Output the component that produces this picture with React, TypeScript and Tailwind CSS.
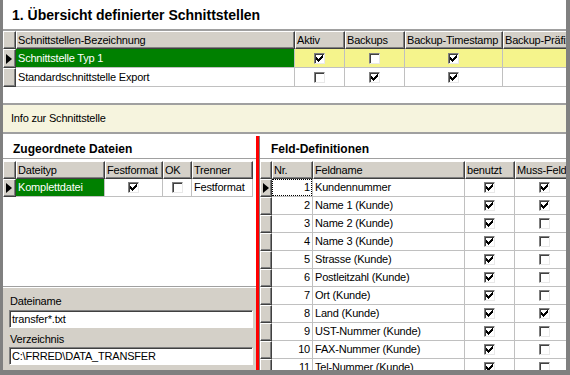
import React from "react";

const CHECK =
  "M6 0h1v1h-1z M5 1h2v1h-2z M0 2h1v1h-1z M4 2h3v1h-3z M0 3h2v1h-2z M3 3h3v1h-3z M0 4h5v1h-5z M1 5h3v1h-3z M2 6h1v1h-1z";

function Check({ on }: { on: boolean }) {
  return (
    <div className="relative w-[11px] h-[11px] bg-white border border-t-[#808080] border-l-[#808080] border-r-[#e8e8e8] border-b-[#e8e8e8] shadow-[inset_1px_1px_0_#404040]">
      {on && (
        <svg
          className="absolute left-[1px] top-[1px]"
          width="7"
          height="7"
          viewBox="0 0 7 7"
          shapeRendering="crispEdges"
        >
          <path d={CHECK} fill="#000" />
        </svg>
      )}
    </div>
  );
}

function Ind({ w, active }: { w: string; active?: boolean }) {
  return (
    <div
      className={`${w} h-full shrink-0 bg-[#d4d0c8] border-t border-l border-t-white border-l-white border-r border-b border-r-[#404040] border-b-[#404040] shadow-[inset_-1px_-1px_0_#808080] flex items-center pl-[2px]`}
    >
      {active && (
        <div className="w-0 h-0 border-y-[5px] border-y-transparent border-l-[6px] border-l-black" />
      )}
    </div>
  );
}

function H({ w, children }: { w: string; children?: React.ReactNode }) {
  return (
    <div
      className={`${w} h-full shrink-0 bg-[#d4d0c8] border-t border-l border-t-white border-l-white border-r border-b border-r-[#404040] border-b-[#404040] shadow-[inset_-1px_-1px_0_#808080] flex items-center pl-[1px] whitespace-nowrap overflow-hidden`}
    >
      {children}
    </div>
  );
}

function D({
  w,
  className = "",
  children,
}: {
  w: string;
  className?: string;
  children?: React.ReactNode;
}) {
  return (
    <div
      className={`${w} h-full shrink-0 border-r border-b border-[#c0c0c0] flex items-center whitespace-nowrap overflow-hidden ${className}`}
    >
      {children}
    </div>
  );
}

const fields: [number, string, boolean, boolean][] = [
  [1, "Kundennummer", true, true],
  [2, "Name 1 (Kunde)", true, true],
  [3, "Name 2 (Kunde)", true, false],
  [4, "Name 3 (Kunde)", true, false],
  [5, "Strasse (Kunde)", true, false],
  [6, "Postleitzahl (Kunde)", true, false],
  [7, "Ort (Kunde)", true, false],
  [8, "Land (Kunde)", true, true],
  [9, "UST-Nummer (Kunde)", true, false],
  [10, "FAX-Nummer (Kunde)", true, false],
  [11, "Tel-Nummer (Kunde)", true, false],
];

export default function App() {
  return (
    <div className="w-[570px] h-[375px] flex flex-col overflow-hidden bg-white border-l-[3px] border-r-[4px] border-b-[5px] border-[#808080] font-['Liberation_Sans',Arial,sans-serif] text-[11px] tracking-[-0.2px] text-black leading-none">
      {/* Title */}
      <div className="h-[31px] shrink-0 border-b-2 border-[#a0a0a0] flex items-center pl-[9px] text-[14px] font-bold tracking-normal">
        1. Übersicht definierter Schnittstellen
      </div>

      {/* Top grid */}
      <div className="h-[74px] shrink-0 border-b-2 border-[#a0a0a0] overflow-hidden">
        <div className="flex h-[18px]">
          <Ind w="w-[13px]" />
          <H w="w-[279px]">Schnittstellen-Bezeichnung</H>
          <H w="w-[50px]">Aktiv</H>
          <H w="w-[60px]">Backups</H>
          <H w="w-[98px]">Backup-Timestamp</H>
          <H w="w-[80px]">Backup-Präfix</H>
        </div>
        <div className="flex h-[19px]">
          <Ind w="w-[13px]" active />
          <D w="w-[279px]" className="bg-[#008000] text-white pl-[2px]">
            Schnittstelle Typ 1
          </D>
          <D w="w-[50px]" className="bg-[#f5f48c] justify-center">
            <Check on />
          </D>
          <D w="w-[60px]" className="bg-[#f5f48c] justify-center">
            <Check on={false} />
          </D>
          <D w="w-[98px]" className="bg-[#f5f48c] justify-center">
            <Check on />
          </D>
          <D w="w-[80px]" className="bg-[#f5f48c]" />
        </div>
        <div className="flex h-[19px]">
          <Ind w="w-[13px]" />
          <D w="w-[279px]" className="pl-[2px]">
            Standardschnittstelle Export
          </D>
          <D w="w-[50px]" className="justify-center">
            <Check on={false} />
          </D>
          <D w="w-[60px]" className="justify-center">
            <Check on />
          </D>
          <D w="w-[98px]" className="justify-center">
            <Check on />
          </D>
          <D w="w-[80px]" />
        </div>
      </div>

      {/* Info bar */}
      <div className="h-[29px] shrink-0 border-b-2 border-[#a0a0a0] bg-[#f6f4de] flex items-center pl-[8px]">
        Info zur Schnittstelle
      </div>
      <div className="h-[2px] shrink-0" />

      {/* Lower area */}
      <div className="flex-1 flex min-h-0">
        {/* Left panel */}
        <div className="w-[253px] shrink-0 flex flex-col">
          <div className="h-[23px] shrink-0 border-b border-[#a0a0a0] flex items-center pt-[3px] pl-[10px] text-[12px] font-bold tracking-normal">
            Zugeordnete Dateien
          </div>
          <div className="h-[2px] shrink-0" />
          <div className="h-[125px] shrink-0 overflow-hidden">
            <div className="flex h-[18px]">
              <Ind w="w-[13px]" />
              <H w="w-[89px]">Dateityp</H>
              <H w="w-[58px]">Festformat</H>
              <H w="w-[29px]">OK</H>
              <H w="w-[61px]">Trenner</H>
            </div>
            <div className="flex h-[18px]">
              <Ind w="w-[13px]" active />
              <D w="w-[89px]" className="bg-[#008000] text-white pl-[2px]">
                Komplettdatei
              </D>
              <D w="w-[58px]" className="justify-center">
                <Check on />
              </D>
              <D w="w-[29px]" className="justify-center">
                <Check on={false} />
              </D>
              <D w="w-[61px]" className="pl-[2px]">
                Festformat
              </D>
            </div>
          </div>
          <div className="flex-1 flex flex-col bg-[#d4d0c8] border-t border-[#a0a0a0] shadow-[inset_0_1px_0_#ffffff] pl-[6px] pr-[3px] pt-[5px]">
            <div className="h-[18px] flex items-center pl-[1px]">Dateiname</div>
            <div className="h-[18px] bg-white border border-t-[#808080] border-l-[#808080] border-r-white border-b-white shadow-[inset_1px_1px_0_#404040] flex items-center pl-[2px]">
              transfer*.txt
            </div>
            <div className="h-[19px] flex items-center pt-[4px] pl-[1px]">Verzeichnis</div>
            <div className="h-[18px] bg-white border border-t-[#808080] border-l-[#808080] border-r-white border-b-white shadow-[inset_1px_1px_0_#404040] flex items-center pl-[2px]">
              C:\FRRED\DATA_TRANSFER
            </div>
          </div>
        </div>

        {/* Red splitter */}
        <div className="w-[3px] shrink-0 bg-[#ff0000]" />

        {/* Right panel */}
        <div className="flex-1 min-w-0 flex flex-col border-l border-[#808080]">
          <div className="h-[23px] shrink-0 border-b border-[#a0a0a0] flex items-center pt-[3px] pl-[11px] text-[12px] font-bold tracking-normal">
            Feld-Definitionen
          </div>
          <div className="h-[2px] shrink-0" />
          <div className="flex-1 overflow-hidden">
            <div className="flex h-[18px]">
              <Ind w="w-[12px]" />
              <H w="w-[41px]">Nr.</H>
              <H w="w-[152px]">Feldname</H>
              <H w="w-[50px]">benutzt</H>
              <H w="w-[60px]">Muss-Feld</H>
            </div>
            {fields.map(([n, name, used, must], i) => (
              <div key={n} className="flex h-[18px]">
                <Ind w="w-[12px]" active={i === 0} />
                <D w="w-[41px]">
                  {i === 0 ? (
                    <div className="w-full h-full border border-dotted border-black flex items-center justify-end pr-[1px]">
                      {n}
                    </div>
                  ) : (
                    <div className="w-full flex justify-end pr-[2px]">{n}</div>
                  )}
                </D>
                <D w="w-[152px]" className="pl-[2px]">
                  {name}
                </D>
                <D w="w-[50px]" className="justify-center">
                  <Check on={used} />
                </D>
                <D w="w-[60px]" className="justify-center">
                  <Check on={must} />
                </D>
              </div>
            ))}
          </div>
        </div>
      </div>
    </div>
  );
}
